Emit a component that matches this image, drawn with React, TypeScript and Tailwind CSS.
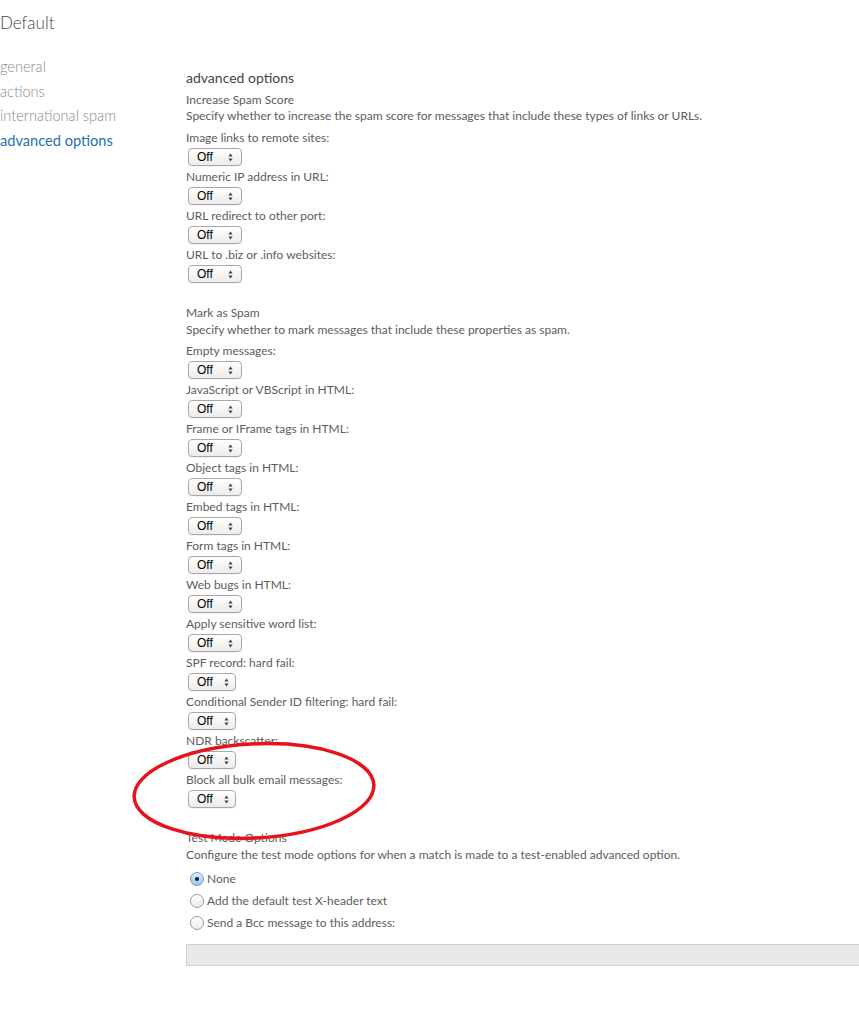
import React from "react";

const font = { fontFamily: "Lato, 'Open Sans', 'Liberation Sans', sans-serif" };

function Select({ narrow }: { narrow?: boolean }) {
  return (
    <div
      className={`relative flex h-[18px] items-center rounded-[4px] border border-[#a8a8a8] bg-gradient-to-b from-white to-[#ececec] shadow-[0_1px_0_rgba(0,0,0,0.05)] ${
        narrow ? "w-[48px]" : "w-[54px]"
      }`}
    >
      <span className="pl-[8px] text-[12px] leading-none text-black" style={{ fontFamily: "'Liberation Sans', Arial, sans-serif" }}>
        Off
      </span>
      <svg
        className={`absolute top-[4px] ${narrow ? "right-[6px]" : "right-[8px]"}`}
        width="5"
        height="9"
        viewBox="0 0 5 9"
      >
        <path d="M2.5 0.5 L4.6 3.4 L0.4 3.4 Z" fill="#444" />
        <path d="M2.5 8.5 L4.6 5.6 L0.4 5.6 Z" fill="#444" />
      </svg>
    </div>
  );
}

function Row({ label, narrow }: { label: string; narrow?: boolean }) {
  return (
    <div className="mb-[1px] flex flex-col">
      <div className="text-[12px] leading-[19px] text-[#5c5c5c]">{label}</div>
      <div className="mt-[1px] pl-[2px]">
        <Select narrow={narrow} />
      </div>
    </div>
  );
}

function Radio({ checked, label }: { checked?: boolean; label: string }) {
  return (
    <div className="flex h-[22px] items-center pl-[4px]">
      {checked ? (
        <span className="flex h-[14px] w-[14px] items-center justify-center rounded-full border border-[#6a9fd3] bg-gradient-to-b from-[#dbeafa] to-[#9cc5ee]">
          <span className="h-[4px] w-[4px] rounded-full bg-[#1a1a1a]" />
        </span>
      ) : (
        <span className="h-[14px] w-[14px] rounded-full border border-[#9a9a9a] bg-gradient-to-b from-white to-[#ececec]" />
      )}
      <span className="pl-[3px] text-[12px] text-[#5c5c5c]">{label}</span>
    </div>
  );
}

export default function App() {
  const sec1 = [
    "Image links to remote sites:",
    "Numeric IP address in URL:",
    "URL redirect to other port:",
    "URL to .biz or .info websites:",
  ];
  const sec2: [string, boolean][] = [
    ["Empty messages:", false],
    ["JavaScript or VBScript in HTML:", false],
    ["Frame or IFrame tags in HTML:", false],
    ["Object tags in HTML:", false],
    ["Embed tags in HTML:", false],
    ["Form tags in HTML:", false],
    ["Web bugs in HTML:", false],
    ["Apply sensitive word list:", false],
    ["SPF record: hard fail:", true],
    ["Conditional Sender ID filtering: hard fail:", true],
    ["NDR backscatter:", true],
    ["Block all bulk email messages:", true],
  ];
  return (
    <div className="relative h-[1024px] w-[859px] overflow-hidden bg-white" style={font}>
      <div className="pt-[11px] text-[17px] font-light leading-[24px] text-[#444]">Default</div>
      <div className="flex">
        <div className="w-[186px] shrink-0 pt-[20px] text-[14.6px] font-light leading-[24.7px] text-[#888]">
          <div>general</div>
          <div>actions</div>
          <div>international spam</div>
          <div className="font-normal text-[#1d6fb8]">advanced options</div>
        </div>
        <div className="flex-1 pt-[33px]">
          <div className="text-[14px] leading-[20px] text-[#444]">advanced options</div>
          <div className="mt-[3px] text-[12px] leading-[17px] text-[#5c5c5c]">Increase Spam Score</div>
          <div className="text-[12px] leading-[16px] text-[#5c5c5c]">
            Specify whether to increase the spam score for messages that include these types of links or URLs.
          </div>
          <div className="mt-[4px]">
            {sec1.map((l) => (
              <Row key={l} label={l} />
            ))}
          </div>
          <div className="mt-[21px] text-[12px] leading-[17px] text-[#5c5c5c]">Mark as Spam</div>
          <div className="text-[12px] leading-[17px] text-[#5c5c5c]">
            Specify whether to mark messages that include these properties as spam.
          </div>
          <div className="mt-[3px]">
            {sec2.map(([l, n]) => (
              <Row key={l} label={l} narrow={n} />
            ))}
          </div>
          <div className="mt-[21px] text-[12px] leading-[17px] text-[#5c5c5c]">Test Mode Options</div>
          <div className="text-[12px] leading-[17px] text-[#5c5c5c]">
            Configure the test mode options for when a match is made to a test-enabled advanced option.
          </div>
          <div className="mt-[5px]">
            <Radio checked label="None" />
            <Radio label="Add the default test X-header text" />
            <Radio label="Send a Bcc message to this address:" />
          </div>
          <div className="mt-[10px] h-[22px] w-[700px] border border-[#d0d0d0] bg-[#e8e8e8]" />
        </div>
      </div>
      <svg className="pointer-events-none absolute left-0 top-0" width="859" height="1024">
        <ellipse
          cx="254"
          cy="791"
          rx="120"
          ry="47"
          transform="rotate(-3 254 791)"
          fill="none"
          stroke="#e8121b"
          strokeWidth="3.5"
        />
      </svg>
    </div>
  );
}
